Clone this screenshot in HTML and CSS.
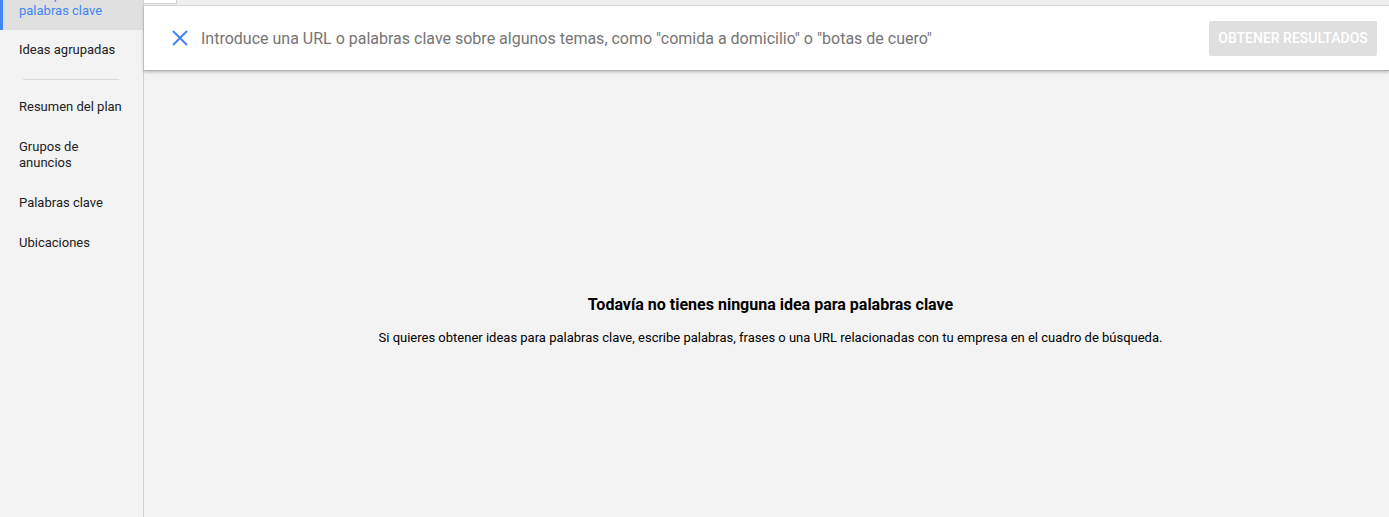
FILE: index.html
```html
<!DOCTYPE html>
<html lang="es">
<head>
    <meta charset="UTF-8">
    <meta name="viewport" content="width=device-width, initial-scale=1.0">
    <title>Planificador de palabras clave</title>
    <link rel="stylesheet" href="styles.css">
</head>
<body>
    <nav class="sidebar">
        <ul class="nav-list">
            <li class="nav-item active">Ideas para<br>palabras clave</li>
            <li class="nav-item">Ideas agrupadas</li>
            <li class="nav-divider"></li>
            <li class="nav-item">Resumen del plan</li>
            <li class="nav-item">Grupos de<br>anuncios</li>
            <li class="nav-item">Palabras clave</li>
            <li class="nav-item">Ubicaciones</li>
        </ul>
    </nav>

    <main class="main">
        <div class="top-strip">
            <div class="tab-stub"></div>
        </div>

        <div class="search-card">
            <svg class="close-icon" width="24" height="24" viewBox="0 0 24 24">
                <path d="M5 5L19 19M19 5L5 19" stroke="#4285f4" stroke-width="2" fill="none"/>
            </svg>
            <input class="search-input" type="text" placeholder='Introduce una URL o palabras clave sobre algunos temas, como "comida a domicilio" o "botas de cuero"'>
            <button class="search-button" disabled>Obtener resultados</button>
        </div>

        <div class="empty-state">
            <div class="empty-title">Todavía no tienes ninguna idea para palabras clave</div>
            <div class="empty-text">Si quieres obtener ideas para palabras clave, escribe palabras, frases o una URL relacionadas con tu empresa en el cuadro de búsqueda.</div>
        </div>
    </main>
</body>
</html>
```

FILE: styles.css
```css
body {
    font-family: Roboto, "Liberation Sans", sans-serif;
    margin: 0;
    height: 100vh;
    overflow: hidden;
    display: flex;
    background: #f3f3f3;
    color: #212121;
}

/* menu lateral */
.sidebar {
    width: 143px;
    flex-shrink: 0;
    border-right: 1px solid #d2d2d2;
    background: #f3f3f3;
    overflow: hidden;
}

.nav-list {
    list-style: none;
    margin: -25px 0 0 0; /* lista desplazada, la primera línea queda fuera */
    padding: 0;
}

.nav-item {
    font-size: 13px;
    line-height: 16px;
    padding: 12px 16px 12px 19px;
    border-left: 3px solid transparent;
    margin-left: -3px;
}

.nav-item.active {
    background: #e0e0e0;
    color: #4285f4;
    border-left-color: #4285f4;
    margin-left: 0;
    padding-left: 16px;
    padding-bottom: 11px;
}

.nav-divider {
    height: 1px;
    background: #dadada;
    margin: 9px 24px 7px 23px;
}

/* zona principal */
.main {
    flex: 1;
    display: flex;
    flex-direction: column;
    min-width: 0;
}

.top-strip {
    height: 5px;
    background: #efefef;
}

.tab-stub {
    width: 32px;
    height: 3px;
    background: #fff;
    border-right: 1px solid #d0d0d0;
    border-bottom: 1px solid #d0d0d0;
}

.search-card {
    height: 64px;
    background: #fff;
    border-top: 1px solid #d6d6d6;
    box-shadow: 0 1px 0 #b0b0b0, 0 2px 3px rgba(0, 0, 0, 0.25);
    display: flex;
    align-items: center;
    padding: 0 12px 0 24px;
    position: relative;
    z-index: 1;
}

.close-icon {
    flex-shrink: 0;
}

.search-input {
    flex: 1;
    border: none;
    outline: none;
    margin-left: 9px;
    padding: 0;
    font-family: inherit;
    font-size: 16px;
    color: #212121;
    background: transparent;
}

.search-input::placeholder {
    color: #757575;
}

.search-button {
    width: 168px;
    height: 35px;
    border: none;
    border-radius: 2px;
    background: #dfdfdf;
    color: #fff;
    font-family: inherit;
    font-size: 14px;
    font-weight: 500;
    text-transform: uppercase;
    padding: 0;
}

.empty-state {
    flex: 1;
    padding: 225px 0 0 8px;
    text-align: center;
}

.empty-title {
    font-size: 16px;
    line-height: 20px;
    font-weight: bold;
    color: #000;
}

.empty-text {
    margin-top: 15px;
    font-size: 13px;
    line-height: 16px;
    color: #000;
}
```
